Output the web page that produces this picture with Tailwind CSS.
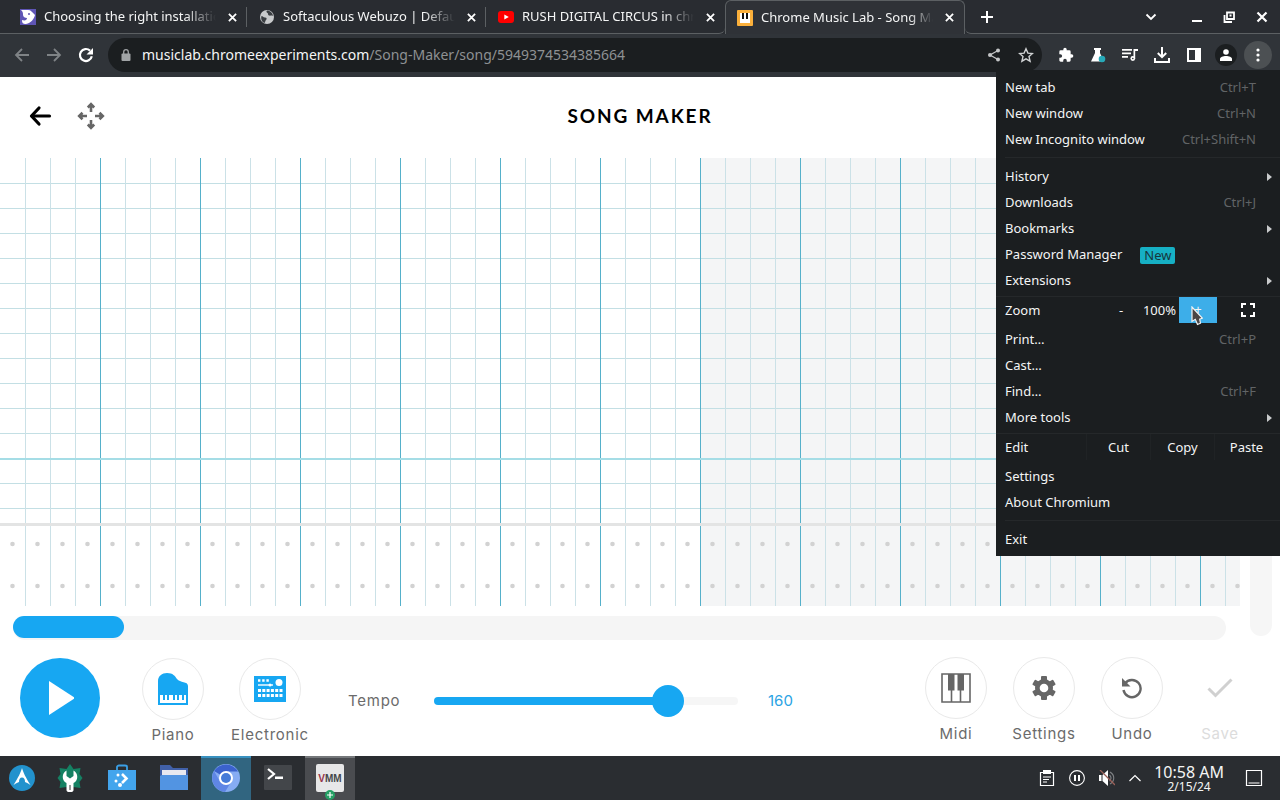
<!DOCTYPE html>
<html lang="en">
<head>
<meta charset="utf-8">
<title>Chrome Music Lab - Song Maker</title>
<script src="https://cdn.jsdelivr.net/npm/@tailwindcss/browser@4"></script>
</head>
<body class="relative flex h-screen flex-col overflow-hidden bg-white font-['Noto_Sans',sans-serif] text-[13px] text-[#f4f5f5]">

<!-- Tab strip -->
<header class="flex h-[34px] shrink-0 items-stretch bg-[#292c31]">
  <div class="w-2 shrink-0 border-b border-[#5c6063]"></div>
  <nav aria-label="Tabs" class="flex min-w-0 items-stretch">
    <div class="relative flex w-[239px] min-w-0 items-center border-b border-[#5c6063] pt-px pr-[7px] pl-3">
      <svg class="size-4 shrink-0" viewBox="0 0 16 16"><rect width="16" height="16" fill="#5f55b5"/><path d="M1 1h7c3 0 4 2 7 5-1 4-4 8-9 9-3 0-4-1-4-4 3 1 5 0 5-2-2 0-4-1-4-3s0-3-2-5Z" fill="#fff"/><circle cx="9" cy="5" r="1" fill="#5f55b5"/></svg>
      <a href="#" class="ml-2 min-w-0 flex-1 overflow-hidden whitespace-nowrap [mask-image:linear-gradient(to_right,#000_82%,transparent)]">Choosing the right installation</a>
      <button aria-label="Close tab" class="ml-2 flex size-4 shrink-0 items-center justify-center"><svg class="size-[9px]" viewBox="0 0 10 10" stroke="#fff" stroke-width="2"><path d="M1 1l8 8M9 1L1 9"/></svg></button>
      <span class="absolute top-[7px] right-0 h-5 w-px bg-[#5c6063]"></span>
    </div>
    <div class="relative flex w-[239px] min-w-0 items-center border-b border-[#5c6063] pt-px pr-[7px] pl-3">
      <svg class="size-4 shrink-0" viewBox="0 0 16 16"><circle cx="8" cy="8" r="7" fill="#c8cacc"/><path d="M2.500 7c1.500 0 1.500 1.500 3.500 1.500s2 1.500 1 2.500-.5 2-1.500 3C3 13 1.500 10 2.500 7ZM8 1.500c-1 1-.5 2 .5 2.500s0 2 1.500 2.500 2.500-.5 4 .5C14 4 11 1.500 8 1.500Z" fill="#3a3e42"/></svg>
      <a href="#" class="ml-2 min-w-0 flex-1 overflow-hidden whitespace-nowrap [mask-image:linear-gradient(to_right,#000_82%,transparent)]">Softaculous Webuzo | Default</a>
      <button aria-label="Close tab" class="ml-2 flex size-4 shrink-0 items-center justify-center"><svg class="size-[9px]" viewBox="0 0 10 10" stroke="#fff" stroke-width="2"><path d="M1 1l8 8M9 1L1 9"/></svg></button>
      <span class="absolute top-[7px] right-0 h-5 w-px bg-[#5c6063]"></span>
    </div>
    <div class="flex w-[239px] min-w-0 items-center rounded-br-md border-b border-[#5c6063] pt-px pr-[7px] pl-3">
      <svg class="size-4 shrink-0" viewBox="0 0 16 16"><rect y="2" width="16" height="12" rx="3" fill="#f00"/><path d="M6.300 5.500v5L10.800 8Z" fill="#fff"/></svg>
      <a href="#" class="ml-2 min-w-0 flex-1 overflow-hidden whitespace-nowrap [mask-image:linear-gradient(to_right,#000_82%,transparent)]">RUSH DIGITAL CIRCUS in chrome</a>
      <button aria-label="Close tab" class="ml-2 flex size-4 shrink-0 items-center justify-center"><svg class="size-[9px]" viewBox="0 0 10 10" stroke="#fff" stroke-width="2"><path d="M1 1l8 8M9 1L1 9"/></svg></button>
    </div>
    <div class="flex w-[240px] min-w-0 items-center rounded-t-md border-x border-t border-[#5c6063] bg-[#2f3237] pr-[7px] pl-[11px]">
      <svg class="size-4 shrink-0" viewBox="0 0 16 16"><rect width="16" height="16" rx="1" fill="#fbb03b"/><path d="M3 3h10v10H3Z" fill="#fff"/><path d="M5 3h2v6H5ZM9 3h2v6H9Z" fill="#111"/></svg>
      <a href="#" aria-current="page" class="ml-2 min-w-0 flex-1 overflow-hidden whitespace-nowrap [mask-image:linear-gradient(to_right,#000_86%,transparent)]">Chrome Music Lab - Song Maker</a>
      <button aria-label="Close tab" class="ml-2 flex size-4 shrink-0 items-center justify-center"><svg class="size-[9px]" viewBox="0 0 10 10" stroke="#fff" stroke-width="2"><path d="M1 1l8 8M9 1L1 9"/></svg></button>
    </div>
  </nav>
  <div class="flex flex-1 items-center rounded-bl-md border-b border-[#5c6063] pr-3 pl-4">
    <button aria-label="New tab"><svg class="size-3" viewBox="0 0 12 12" stroke="#fff" stroke-width="2"><path d="M6 0v12M0 6h12"/></svg></button>
    <div class="ml-auto flex items-center">
      <button aria-label="Search tabs" class="mr-[34px]"><svg class="size-3" viewBox="0 0 12 12" fill="none" stroke="#fff" stroke-width="1.800"><path d="M1.500 3.500L6 8l4.500-4.500"/></svg></button>
      <button aria-label="Minimize" class="mr-5"><svg class="size-3" viewBox="0 0 12 12"><path d="M1 9h10v2H1Z" fill="#fff"/></svg></button>
      <button aria-label="Restore" class="mr-[21px]"><svg class="size-3" viewBox="0 0 12 12" fill="none" stroke="#fff" stroke-width="1.800"><path d="M4 1.500h7v6.500H4ZM1.500 4v7H9M6.500 4.500h2"/></svg></button>
      <button aria-label="Close window"><svg class="size-3" viewBox="0 0 12 12" stroke="#fff" stroke-width="2.200"><path d="M1.500 1.500l9 9M10.500 1.500l-9 9"/></svg></button>
    </div>
  </div>
</header>

<!-- Toolbar -->
<div class="relative z-10 flex h-[43px] shrink-0 items-center bg-[#303439] pr-2 pb-[2px] pl-[14px]">
  <button aria-label="Back" class="mr-4"><svg class="size-4" viewBox="0 0 16 16" fill="none" stroke="#7f8386" stroke-width="1.800"><path d="M15 8H2M8 2L2 8l6 6"/></svg></button>
  <button aria-label="Forward" class="mr-4"><svg class="size-4" viewBox="0 0 16 16" fill="none" stroke="#7f8386" stroke-width="1.800"><path d="M1 8h13M8 2l6 6-6 6"/></svg></button>
  <button aria-label="Reload" class="mr-[14px]"><svg class="size-4" viewBox="0 0 16 16"><path d="M13.800 9.300A6 6 0 1 1 12 3.600" fill="none" stroke="#fff" stroke-width="2.200"/><path d="M15 1v6.500H8.500Z" fill="#fff"/></svg></button>
  <div class="flex h-[34px] min-w-0 flex-1 items-center rounded-full bg-[#1b1e20] pr-2 pl-[13px]">
    <svg class="h-3 w-[10px] shrink-0" viewBox="0 0 10 12"><rect x=".5" y="4.500" width="9" height="7.500" rx="1" fill="#a1a4a6"/><path d="M2.700 5V3a2.300 2.300 0 0 1 4.600 0v2" fill="none" stroke="#a1a4a6" stroke-width="1.300"/></svg>
    <div role="textbox" aria-label="Address" tabindex="0" class="ml-[11px] min-w-0 flex-1 overflow-hidden text-sm whitespace-nowrap text-[#8e9193]"><span class="text-[#f4f5f5]">musiclab.chromeexperiments.com</span>/Song-Maker/song/5949374534385664</div>
    <button aria-label="Share" class="mr-[17px]"><svg class="size-[14px]" viewBox="0 0 14 14" fill="#c5c7c8"><circle cx="11" cy="2.500" r="2"/><circle cx="3" cy="7" r="2"/><circle cx="11" cy="11.500" r="2"/><path d="M11 2.500L3 7l8 4.500" fill="none" stroke="#c5c7c8" stroke-width="1.300"/></svg></button>
    <button aria-label="Bookmark"><svg class="size-4" viewBox="0 0 16 16" fill="none" stroke="#d0d2d3" stroke-width="1.400"><path d="M8 1.800l1.900 4.300 4.600.4-3.500 3.100 1.100 4.600L8 11.800l-4.100 2.400L5 9.600 1.500 6.500l4.600-.4Z"/></svg></button>
  </div>
  <div class="flex items-center pl-4">
    <button aria-label="Extensions" class="mr-4"><svg class="size-4" viewBox="0 0 24 24" fill="#fff"><path d="M20.500 11H19V7a2 2 0 0 0-2-2h-4V3.500a2.500 2.500 0 0 0-5 0V5H4a2 2 0 0 0-2 2v3.800h1.500a2.700 2.700 0 0 1 0 5.400H2V20c0 1.100.9 2 2 2h3.800v-1.500a2.700 2.700 0 0 1 5.400 0V22H17a2 2 0 0 0 2-2v-4h1.500a2.500 2.500 0 0 0 0-5Z"/></svg></button>
    <button aria-label="Labs" class="mr-4"><svg class="size-4" viewBox="0 0 16 16"><path d="M4 1h7v2h-1v3l4 8.500H1L5 6V3H4Z" fill="#fff"/><circle cx="12" cy="12" r="3.300" fill="#27a9b8"/></svg></button>
    <button aria-label="Media controls" class="mr-4"><svg class="size-4" viewBox="0 0 16 16" fill="#fff"><path d="M0 2h10v1.700H0ZM0 5.500h9v1.700H0ZM0 9h6v1.700H0ZM11.500 2H16v2h-2.800v7.500h-1.700Z"/><circle cx="10.800" cy="11.500" r="2.400"/><circle cx="10.800" cy="11.500" r=".8" fill="#303439"/></svg></button>
    <button aria-label="Downloads" class="mr-4"><svg class="size-4" viewBox="0 0 16 16" fill="none" stroke="#fff" stroke-width="2"><path d="M8 0v10M3.800 6L8 10.200 12.200 6M1 11v4h14v-4"/></svg></button>
    <button aria-label="Side panel" class="mr-[13px]"><svg class="size-4" viewBox="0 0 16 16"><path d="M1 1h14v14H1ZM3 3v10h6V3Z" fill="#fff" fill-rule="evenodd"/></svg></button>
    <button aria-label="Profile" class="mr-[7px] flex size-[22px] items-center justify-center rounded-full bg-[#1b1e20]"><svg class="size-3" viewBox="0 0 12 12" fill="#fff"><circle cx="6" cy="3" r="2.800"/><path d="M0 12V10c0-2 3-3 6-3s6 1 6 3v2Z"/></svg></button>
    <button aria-label="Chromium menu" aria-expanded="true" class="flex size-7 items-center justify-center rounded-full bg-[#4c5053]"><svg class="h-[14px] w-1" viewBox="0 0 4 14" fill="#fff"><circle cx="2" cy="2" r="1.600"/><circle cx="2" cy="7" r="1.600"/><circle cx="2" cy="12" r="1.600"/></svg></button>
  </div>

  <!-- Application menu -->
  <div role="menu" class="absolute top-9 right-0 flex w-[284px] flex-col bg-[#1b1e20] py-1 [&>button]:pt-[2px]">
    <button role="menuitem" class="flex h-[26px] items-center justify-between pr-6 pl-[9px]">New tab<span class="text-[#616466]">Ctrl+T</span></button>
    <button role="menuitem" class="flex h-[26px] items-center justify-between pr-6 pl-[9px]">New window<span class="text-[#616466]">Ctrl+N</span></button>
    <button role="menuitem" class="flex h-[26px] items-center justify-between pr-6 pl-[9px]">New Incognito window<span class="text-[#616466]">Ctrl+Shift+N</span></button>
    <hr class="my-[5px] ml-[9px] border-[#25282a]">
    <button role="menuitem" class="flex h-[26px] items-center justify-between pr-2 pl-[9px]">History<svg class="h-2 w-[5px]" viewBox="0 0 5 8"><path d="M0 0l5 4-5 4Z" fill="#c9cbcc"/></svg></button>
    <button role="menuitem" class="flex h-[26px] items-center justify-between pr-6 pl-[9px]">Downloads<span class="text-[#616466]">Ctrl+J</span></button>
    <button role="menuitem" class="flex h-[26px] items-center justify-between pr-2 pl-[9px]">Bookmarks<svg class="h-2 w-[5px]" viewBox="0 0 5 8"><path d="M0 0l5 4-5 4Z" fill="#c9cbcc"/></svg></button>
    <button role="menuitem" class="flex h-[26px] items-center pl-[9px]">Password Manager<span class="ml-[18px] h-[17px] rounded-xs bg-[#16b0c4] px-1 leading-4 text-[#17363c]">New</span></button>
    <button role="menuitem" class="flex h-[26px] items-center justify-between pr-2 pl-[9px]">Extensions<svg class="h-2 w-[5px]" viewBox="0 0 5 8"><path d="M0 0l5 4-5 4Z" fill="#c9cbcc"/></svg></button>
    <div class="my-[3px] flex h-[27px] items-stretch border-t border-[#25282a] pr-[2px] pl-[9px]">
      <span class="flex flex-1 items-center pt-[2px]">Zoom</span>
      <button aria-label="Zoom out" class="w-9 pt-[2px]">-</button>
      <span class="flex w-10 items-center justify-end pt-[2px] pr-[3px]">100%</span>
      <button aria-label="Zoom in" class="relative w-[38px] bg-[#3daee9]">+
        <svg class="absolute top-[9px] left-3 h-5 w-3" viewBox="0 0 12 20"><path d="M1 1v14.500l3.300-2.200L6.500 18.500l3-1.300-.8-4 2.600-1Z" fill="#4a4545" stroke="#f4f4f4" stroke-width="1.200"/></svg>
      </button>
      <button aria-label="Full screen" class="flex w-[61px] items-center justify-center"><svg class="size-[14px]" viewBox="0 0 14 14" fill="none" stroke="#fff" stroke-width="2"><path d="M1 5V1h4M9 1h4v4M13 9v4H9M5 13H1V9"/></svg></button>
    </div>
    <button role="menuitem" class="flex h-[26px] items-center justify-between pr-6 pl-[9px]">Print…<span class="text-[#616466]">Ctrl+P</span></button>
    <button role="menuitem" class="flex h-[26px] items-center pl-[9px]">Cast…</button>
    <button role="menuitem" class="flex h-[26px] items-center justify-between pr-6 pl-[9px]">Find…<span class="text-[#616466]">Ctrl+F</span></button>
    <button role="menuitem" class="flex h-[26px] items-center justify-between pr-2 pl-[9px]">More tools<svg class="h-2 w-[5px]" viewBox="0 0 5 8"><path d="M0 0l5 4-5 4Z" fill="#c9cbcc"/></svg></button>
    <div class="my-[3px] flex h-[27px] items-stretch border-t border-[#25282a] pr-[2px] pl-[9px]">
      <span class="flex flex-1 items-center pt-[2px]">Edit</span>
      <button class="w-16 border-l border-[#202325] pt-[2px]">Cut</button>
      <button class="w-16 border-l border-[#202325] pt-[2px]">Copy</button>
      <button class="w-16 border-l border-[#202325] pt-[2px]">Paste</button>
    </div>
    <button role="menuitem" class="flex h-[26px] items-center pl-[9px]">Settings</button>
    <button role="menuitem" class="flex h-[26px] items-center pl-[9px]">About Chromium</button>
    <hr class="my-[5px] ml-[9px] border-[#25282a]">
    <button role="menuitem" class="flex h-[26px] items-center pl-[9px]">Exit</button>
  </div>
</div>

<!-- Song Maker -->
<main class="flex min-h-0 flex-1 flex-col font-[Inter,sans-serif] text-[15px] text-[#6b6b6b]">
  <div class="grid h-[81px] shrink-0 grid-cols-[1fr_auto_1fr] items-center pb-[3px] pl-7">
    <div class="flex items-center">
      <button aria-label="Go back"><svg class="size-6" viewBox="0 0 24 24" fill="none" stroke="#000" stroke-width="3.200" stroke-linecap="round"><path d="M21.500 12H4"/><path d="M11 4L3.500 12l7.500 8" stroke-linejoin="round"/></svg></button>
      <button aria-label="Move" class="ml-[25px]"><svg class="size-7" viewBox="0 0 28 28" fill="none" stroke="#666" stroke-width="2.600"><path d="M14 10V2.500M10.800 5.500L14 2.200l3.200 3.300M14 18v7.500M10.800 22.500l3.200 3.300 3.200-3.300M10 14H2.500M5.500 10.800L2.200 14l3.300 3.200M18 14h7.500M22.500 10.800l3.300 3.200-3.300 3.200"/></svg></button>
    </div>
    <h1 class="pr-7 font-[Lato,sans-serif] text-[19px] font-bold tracking-widest text-black">SONG MAKER</h1>
  </div>

  <div class="flex min-h-0 flex-1">
    <div class="flex min-w-0 flex-1 flex-col">
      <!-- Note grid: 25px cells, a stronger line every fourth beat -->
      <svg class="min-h-0 w-full flex-1" role="img" aria-label="Note grid">
        <defs>
          <pattern id="cell" width="25" height="25" patternUnits="userSpaceOnUse"><path d="M0 .5h25" stroke="#c3dfe4"/></pattern>
          <pattern id="beat" width="100" height="10" patternUnits="userSpaceOnUse"><path d="M25.500 0v10M50.500 0v10M75.500 0v10" stroke="#cbe1e7"/><path d="M.5 0v10" stroke="#55b0ca"/></pattern>
          <pattern id="hit" y="365" width="25" height="42" patternUnits="userSpaceOnUse"><circle cx="12.500" cy="21" r="2.300" fill="#d2d2d2"/></pattern>
        </defs>
        <rect x="700" width="100%" height="100%" fill="#f4f5f6"/>
        <rect y="1" width="100%" height="364" fill="url(#cell)"/>
        <rect x="1" width="100%" height="100%" fill="url(#beat)"/>
        <rect y="300" width="100%" height="2" fill="#a5dde6"/>
        <rect y="365" width="100%" height="3" fill="#e3e4e4"/>
        <rect y="368" width="100%" height="80" fill="url(#hit)"/>
      </svg>
      <div class="mt-[10px] mr-[14px] ml-[13px] h-6 shrink-0 rounded-full bg-[#f5f5f5]"><div class="h-[22px] w-[111px] rounded-full bg-[#17a7f2]"></div></div>
    </div>
    <div class="mr-2 mb-1 ml-[10px] w-[22px] rounded-full bg-[#f6f6f6]"></div>
  </div>

  <div class="flex h-[116px] shrink-0 items-start justify-between pt-[17px] pr-4 pl-5">
    <div class="flex items-start pt-px">
      <button aria-label="Play" class="mr-[25px] flex size-20 items-center justify-center rounded-full bg-[#17a7f2]"><svg class="h-[34px] w-7" viewBox="0 0 28 34"><path d="M3 0l26 17L3 34Z" fill="#fff"/></svg></button>
      <button class="mr-px flex w-24 flex-col items-center gap-1"><span class="flex size-[62px] items-center justify-center rounded-full border border-[#e9e9e9]"><svg class="size-8" viewBox="0 0 32 32"><path d="M1 32V8C1 3 5 0 10 0c6 0 8 3 10 6 3 4 11 2 11 7v19Z" fill="#17a7f2"/><path d="M3 22h26v8H3Z" fill="#fff"/><path d="M6 22h2v5H6ZM10 22h2v5h-2ZM16 22h2v5h-2ZM20 22h2v5h-2ZM25 22h2v5h-2Z" fill="#17a7f2"/></svg></span><span class="tracking-wider">Piano</span></button>
      <button class="flex w-24 flex-col items-center gap-1"><span class="flex size-[62px] items-center justify-center rounded-full border border-[#e9e9e9]"><svg class="h-[26px] w-8" viewBox="0 0 32 26"><rect width="32" height="26" fill="#17a7f2"/><g fill="none" stroke="#fff"><path d="M4 4.500h12" stroke-width="2.400" stroke-dasharray="2.400 1.800"/><path d="M4 9h15" stroke-width="1.400"/><path d="M4 14.500h25M4 19.500h25" stroke-width="3.200" stroke-dasharray="3 1.300"/></g><circle cx="25" cy="6.500" r="3.500" fill="#fff"/><circle cx="16" cy="9" r="1.500" fill="#fff"/></svg></span><span class="tracking-wider">Electronic</span></button>
      <div class="ml-[30px] flex h-[85px] items-center">
        <label for="tempo" class="w-14 pt-[2px] tracking-wider">Tempo</label>
        <input id="tempo" type="range" min="0" max="200" value="160" class="ml-[30px] h-8 w-[304px] appearance-none bg-transparent [&::-webkit-slider-runnable-track]:h-2 [&::-webkit-slider-runnable-track]:rounded-full [&::-webkit-slider-runnable-track]:bg-[linear-gradient(to_right,#17a7f2_77%,#f6f6f6_77%)] [&::-webkit-slider-thumb]:mt-[-12px] [&::-webkit-slider-thumb]:size-8 [&::-webkit-slider-thumb]:appearance-none [&::-webkit-slider-thumb]:rounded-full [&::-webkit-slider-thumb]:bg-[#17a7f2]">
        <output for="tempo" class="ml-[30px] pt-[2px] text-[#2ba3e4]">160</output>
      </div>
    </div>
    <div class="flex items-start">
      <button class="flex w-[88px] flex-col items-center gap-1"><span class="flex size-[62px] items-center justify-center rounded-full border border-[#e9e9e9]"><svg class="size-[30px]" viewBox="0 0 30 30"><path d="M1 1h28v28H1ZM10.500 17v12M19.500 17v12" fill="none" stroke="#666" stroke-width="1.600"/><path d="M7 1h6.500v16.500H7ZM16.500 1H23v16.500h-6.500Z" fill="#666"/></svg></span><span class="tracking-wider">Midi</span></button>
      <button class="flex w-[88px] flex-col items-center gap-1"><span class="flex size-[62px] items-center justify-center rounded-full border border-[#e9e9e9]"><svg class="size-[26px]" viewBox="0 0 26 26"><g fill="#666"><circle cx="13" cy="13" r="9"/><rect x="10" y="1" width="6" height="24" rx="1"/><rect x="10" y="1" width="6" height="24" rx="1" transform="rotate(60 13 13)"/><rect x="10" y="1" width="6" height="24" rx="1" transform="rotate(120 13 13)"/></g><circle cx="13" cy="13" r="4.300" fill="#fff"/></svg></span><span class="tracking-wider">Settings</span></button>
      <button class="flex w-[88px] flex-col items-center gap-1"><span class="flex size-[62px] items-center justify-center rounded-full border border-[#e9e9e9]"><svg class="size-[22px]" viewBox="0 0 22 22"><path d="M4 6.500A8.600 8.600 0 1 1 2.500 13" fill="none" stroke="#666" stroke-width="2.400"/><path d="M1 1v8.500h8.500Z" fill="#666"/></svg></span><span class="tracking-wider">Undo</span></button>
      <button disabled class="flex w-[88px] flex-col items-center gap-1 text-[#dcdcdc]"><span class="flex size-[62px] items-center justify-center"><svg class="h-5 w-[26px]" viewBox="0 0 26 20" fill="none" stroke="#d0d0d0" stroke-width="3"><path d="M1.500 10.500l7 7L24.500 1.500"/></svg></span><span class="tracking-wider">Save</span></button>
    </div>
  </div>
</main>

<!-- Desktop panel -->
<footer class="flex h-11 shrink-0 items-stretch gap-[2px] bg-[#2a2d31]">
  <button aria-label="Applications" class="flex w-[43px] items-center justify-center"><svg class="size-[26px]" viewBox="0 0 26 26"><circle cx="13" cy="13" r="13" fill="#2292cd"/><path d="M13 3c1 4 4 10 8.500 17-3-2-4-2.500-5.500-3 0-3-1-4.500-3-4.500s-3 1.500-3 4.500c-1.500.5-2.500 1-5.500 3C9 13 12 7 13 3Z" fill="#fff"/></svg></button>
  <button aria-label="System tools" class="flex w-[50px] items-center justify-center"><svg class="size-7" viewBox="0 0 28 28"><path d="M14 0l3.500 5 7-1-1 6 3 4-3 4 1 6-7-1-3.500 3-3.500-3-7 1 1-6-3-4 3-4-1-6 7 1Z" fill="#158163"/><path d="M10.500 6.500V12l3.500 2.500L17.500 12V6.500c5 3 5 10 0 12.500v7c0 3-7 3-7 0v-7C5.500 16.500 5.500 9.500 10.500 6.500Z" fill="#fff"/><path d="M14 21v5" stroke="#777" stroke-width="1.500"/></svg></button>
  <button aria-label="Discover" class="flex w-[50px] items-center justify-center"><svg class="size-7" viewBox="0 0 28 28"><path d="M9 7V3c0-1 1-1.500 2-1.500h6c1 0 2 .5 2 1.500v4" fill="none" stroke="#3a9fe6" stroke-width="1.800"/><path d="M0 6h28v20H0Z" fill="#43a5ed"/><path d="M14 10l4.500 4.500L14 19" fill="none" stroke="#fff" stroke-width="2.600"/><g fill="#fff"><circle cx="10" cy="11" r="1.500"/><circle cx="8" cy="17" r="1.500"/><circle cx="12" cy="21" r="2"/></g></svg></button>
  <button aria-label="Files" class="flex w-[50px] items-center justify-center"><svg class="size-7" viewBox="0 0 28 28"><path d="M0 1h10l3 3h15v8H0Z" fill="#4160a8"/><path d="M2 6h24v8H2Z" fill="#e8e8f0"/><path d="M0 12l2-1h26v15H0Z" fill="#5294e2"/></svg></button>
  <button aria-label="Chromium" class="flex w-[50px] items-center justify-center border-t-2 border-[#3891c0] bg-[#316580] pb-[2px]"><svg class="size-7" viewBox="0 0 28 28"><circle cx="14" cy="14" r="14" fill="#86acf3"/><path d="M14 14L2 7A14 14 0 0 1 26 7.500H14Z" fill="#3b62cd"/><path d="M14 14L8 17.500 2 7A14 14 0 0 0 13 28l6-10Z" fill="#5f86e5"/><circle cx="14" cy="14" r="7" fill="#fff"/><circle cx="14" cy="14" r="5" fill="#467bd8"/></svg></button>
  <button aria-label="Terminal" class="flex w-[50px] items-center justify-center"><svg class="size-7" viewBox="0 0 28 28"><rect y="1" width="28" height="25" rx="1" fill="#43464a"/><path d="M4 5l6 5-6 5" fill="none" stroke="#fff" stroke-width="2.200"/><path d="M11 12.500h8v2.500h-8Z" fill="#fff"/></svg></button>
  <button aria-label="Virtual Machine Manager" class="relative flex w-[50px] items-center justify-center border-t-2 border-[#74777a] bg-[#4a4c50] pb-[2px]">
    <span class="flex size-7 items-center justify-center rounded-xs bg-[#e7e7e8] font-['Liberation_Sans',sans-serif] text-[10px] font-bold text-[#44474b]"><span class="text-[#96344a]">V</span>MM</span>
    <svg class="absolute bottom-0 left-5 size-[10px]" viewBox="0 0 10 10"><circle cx="5" cy="5" r="5" fill="#25a065"/><path d="M5 2v6M2 5h6" stroke="#fff" stroke-width="1.200"/></svg>
  </button>
  <div class="ml-auto flex items-center pr-[17px]">
    <button aria-label="Clipboard" class="mr-[14px]"><svg class="size-4" viewBox="0 0 16 16"><path d="M1.500 2.500h13v13h-13Z" fill="none" stroke="#fff" stroke-width="1.200"/><path d="M4 0h8v4H4Z" fill="#fff"/><path d="M4 7h8M4 9.500h6M4 12h4" stroke="#fff" stroke-width="1.200"/></svg></button>
    <button aria-label="Pause" class="mr-[14px]"><svg class="size-4" viewBox="0 0 16 16" fill="none" stroke="#fff"><circle cx="8" cy="8" r="7.400" stroke-width="1.100"/><path d="M6 5v6M10 5v6" stroke-width="2"/></svg></button>
    <button aria-label="Muted" class="mr-[14px]"><svg class="size-4" viewBox="0 0 16 16"><path d="M0 5h2.500v6H0ZM3.500 5L9 0v16l-5.500-5Z" fill="#fff"/><path d="M10.500 5c2 2 2 4 0 6M11 2c5 3 5 9 0 12" fill="none" stroke="#808386" stroke-width="1.100"/><path d="M1 0l15 15" stroke="#9a6058" stroke-width="1.300"/></svg></button>
    <button aria-label="Show hidden icons" class="mr-[13px]"><svg class="h-2 w-3" viewBox="0 0 12 8" fill="none" stroke="#fff" stroke-width="1.200"><path d="M.5 7L6 1.500 11.500 7"/></svg></button>
    <time datetime="2024-02-15T10:58" class="mr-[21px] text-center whitespace-nowrap"><span class="block text-base leading-[17px]">10:58 AM</span><span class="block text-xs leading-3">2/15/24</span></time>
    <button aria-label="Show desktop"><svg class="size-[18px]" viewBox="0 0 18 18" fill="none" stroke="#fff" stroke-width="1.200"><path d="M1.500 1.500h15v15h-15ZM3.500 14h11"/></svg></button>
  </div>
</footer>
</body>
</html>
